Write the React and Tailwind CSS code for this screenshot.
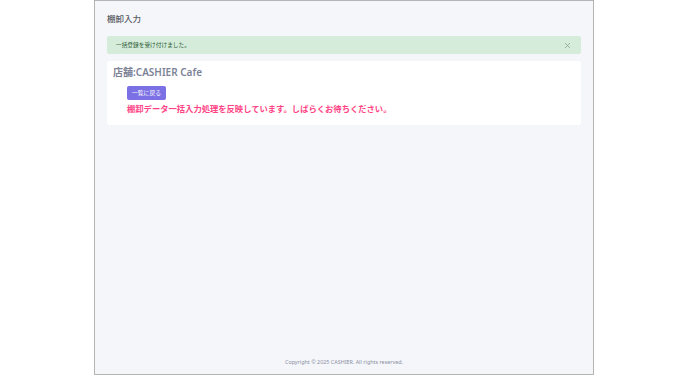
import { X } from "lucide-react";

export default function App() {
  return (
    <div className="w-full h-[375px] bg-white" style={{ fontFamily: '"Noto Sans", "Noto Sans CJK JP", sans-serif' }}>
      <div className="mx-auto w-[500px] h-[375px] border border-[#b4b4b4] bg-[#f5f6fa] flex flex-col px-3">
        <h1 className="h-[35px] pt-[13px] text-[8.5px] leading-[10px] text-[#555a63] font-medium">棚卸入力</h1>

        <div className="h-[18px] rounded-[2px] bg-[#d4ecd9] flex items-center justify-between pl-[9px] pr-[9px]">
          <span className="text-[5.7px] leading-[8px] text-[#2b5a37]">一括登録を受け付けました。</span>
          <X size={9} strokeWidth={1.8} className="text-[#7b9a84]" />
        </div>

        <div className="mt-[7px] h-[64px] bg-white rounded-[3px] px-[6px] pt-[4px]">
          <div className="text-[10px] leading-[14px] text-[#7d8397] font-semibold">店舗:CASHIER Cafe</div>
          <div className="pl-[14px] mt-[7px] flex flex-col items-start">
            <button className="h-[14px] px-[5px] rounded-[2px] bg-[#7b70e4] text-white text-[5.8px] leading-[14px]">一覧に戻る</button>
            <div className="mt-[3px] text-[8.3px] leading-[12px] text-[#ff4485] font-semibold">
              棚卸データ一括入力処理を反映しています。しばらくお待ちください。
            </div>
          </div>
        </div>

        <div className="flex-1" />
        <footer className="h-[24px] flex items-center justify-center text-[5.4px] text-[#8a8fa3]">
          Copyright © 2025 CASHIER. All rights reserved.
        </footer>
      </div>
    </div>
  );
}
